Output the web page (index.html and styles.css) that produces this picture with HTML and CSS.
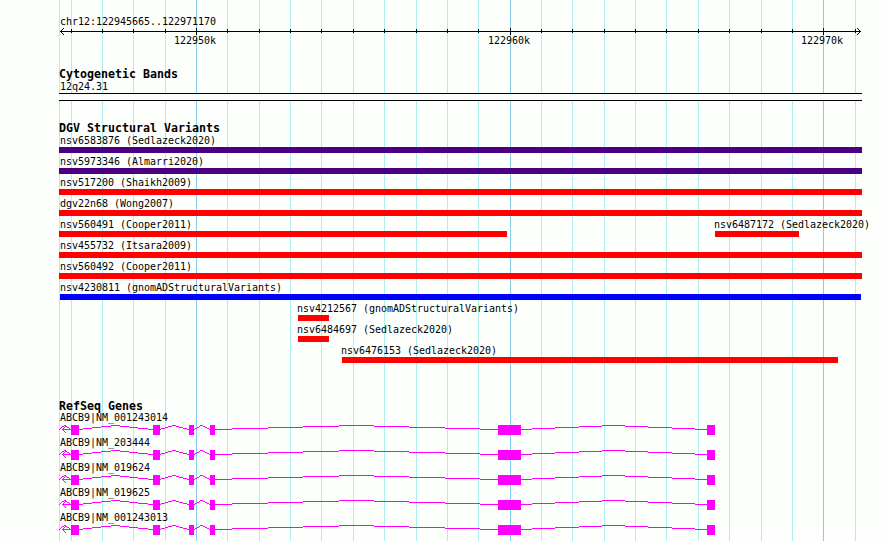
FILE: index.html
```
<!DOCTYPE html>
<html lang="en">
<head>
  <meta charset="UTF-8" />
  <meta name="viewport" content="width=device-width, initial-scale=1" />
  <title>chr12:122945665..122971170</title>
  <link rel="stylesheet" href="styles.css">
</head>
<body>

  <!-- Vertical guide lines -->
  <svg class="grid" width="890" height="541" aria-hidden="true">
    <path class="minor" d="M59.5 0V541M71.5 0V541M102.5 0V541M133.5 0V541M165.5 0V541M227.5 0V541M259.5 0V541M290.5 0V541M321.5 0V541M353.5 0V541M384.5 0V541M416.5 0V541M447.5 0V541M478.5 0V541M541.5 0V541M572.5 0V541M604.5 0V541M635.5 0V541M666.5 0V541M698.5 0V541M729.5 0V541M761.5 0V541M792.5 0V541M855.5 0V541"/>
    <path class="major" d="M196.5 0V541M510.5 0V541M823.5 0V541"/>
  </svg>

  <!-- Gene model, shared by all the transcripts -->
  <svg class="defs" width="0" height="0" aria-hidden="true">
    <symbol id="gene" viewBox="0 0 656 10">
      <path class="exon" d="M12 0h8v10h-8zM94 0h7v10h-7zM130 0h5v10h-5zM151 0h5v10h-5zM439 0h23v10h-23zM648 0h8v10h-8z"/>
      <path class="intron" d="M20 4.5h4M24 3.5h9M33 2.5h9M42 1.5h10M52 .5h9M61 1.5h9M70 2.5h9M79 3.5h10M89 4.5h5"/>
      <path class="intron" d="M101 4.5h1M102 3.5h4M106 2.5h3M109 1.5h4M113 .5h4M117 1.5h3M120 2.5h4M124 3.5h4M128 4.5h2"/>
      <path class="intron" d="M135 4.5h1M136 3.5h2M138 2.5h2M140 1.5h1M141 .5h3M144 1.5h2M146 2.5h2M148 3.5h2M150 4.5h1"/>
      <path class="intron" d="M156 4.5h17M173 3.5h36M209 2.5h35M244 1.5h36M280 .5h35M315 1.5h35M350 2.5h36M386 3.5h35M421 4.5h18"/>
      <path class="intron" d="M462 4.5h11M473 3.5h23M496 2.5h24M520 1.5h23M543 .5h23M566 1.5h23M589 2.5h24M613 3.5h23M636 4.5h12"/>
      <!-- Clipped last intron and strand arrow -->
      <path class="intron" d="M0 4.5h1M1 3.5h1M2 2.5h1M3 1.5h2M5 .5h2M7 1.5h1M8 2.5h2M10 3.5h1"/>
      <path class="intron" d="M3 4.5h9M4 3.5h1M5 2.5h1M6 1.5h1M4 5.5h1M5 6.5h1M6 7.5h1"/>
    </symbol>
  </svg>

  <main class="panel">
    <header class="ruler">
      <div class="label">chr12:122945665..122971170</div>
      <svg class="scale" width="803" height="9">
        <path d="M1 4.5H802"/>
        <path class="tip" d="M4 1h1v1h-1zM3 2h1v1h-1zM2 3h1v1h-1zM2 5h1v1h-1zM3 6h1v1h-1zM4 7h1v1h-1zM798 1h1v1h-1zM799 2h1v1h-1zM800 3h1v1h-1zM800 5h1v1h-1zM799 6h1v1h-1zM798 7h1v1h-1z"/>
        <path d="M12.5 2v4M43.5 2v4M74.5 2v4M106.5 2v4M137.5 1v7M168.5 2v4M200.5 2v4M231.5 2v4M262.5 2v4M294.5 2v4M325.5 2v4M357.5 2v4M388.5 2v4M419.5 2v4M451.5 1v7M482.5 2v4M513.5 2v4M545.5 2v4M576.5 2v4M607.5 2v4M639.5 2v4M670.5 2v4M702.5 2v4M733.5 2v4M764.5 1v7M796.5 2v4"/>
      </svg>
      <div class="ticks">
        <span>122950k</span>
        <span>122960k</span>
        <span>122970k</span>
      </div>
    </header>

    <section class="track cytobands">
      <h2>Cytogenetic Bands</h2>
      <div class="label">12q24.31</div>
      <div class="band"></div>
    </section>

    <section class="track variants">
      <h2>DGV Structural Variants</h2>
      <div class="row">
        <div class="feature indigo full" style="width: 803px"><span class="label">nsv6583876 (Sedlazeck2020)</span></div>
      </div>
      <div class="row">
        <div class="feature indigo full" style="width: 803px"><span class="label">nsv5973346 (Almarri2020)</span></div>
      </div>
      <div class="row">
        <div class="feature red full" style="width: 803px"><span class="label">nsv517200 (Shaikh2009)</span></div>
      </div>
      <div class="row">
        <div class="feature red full" style="width: 803px"><span class="label">dgv22n68 (Wong2007)</span></div>
      </div>
      <div class="row">
        <div class="feature red full" style="width: 448px"><span class="label">nsv560491 (Cooper2011)</span></div>
        <div class="feature red" style="width: 84px; margin-left: 208px"><span class="label">nsv6487172 (Sedlazeck2020)</span></div>
      </div>
      <div class="row">
        <div class="feature red full" style="width: 803px"><span class="label">nsv455732 (Itsara2009)</span></div>
      </div>
      <div class="row">
        <div class="feature red full" style="width: 803px"><span class="label">nsv560492 (Cooper2011)</span></div>
      </div>
      <div class="row">
        <div class="feature blue" style="width: 801px; margin-left: 1px"><span class="label inset">nsv4230811 (gnomADStructuralVariants)</span></div>
      </div>
      <div class="row">
        <div class="feature red" style="width: 31px; margin-left: 239px"><span class="label">nsv4212567 (gnomADStructuralVariants)</span></div>
      </div>
      <div class="row">
        <div class="feature red" style="width: 31px; margin-left: 239px"><span class="label">nsv6484697 (Sedlazeck2020)</span></div>
      </div>
      <div class="row">
        <div class="feature red" style="width: 496px; margin-left: 283px"><span class="label">nsv6476153 (Sedlazeck2020)</span></div>
      </div>
    </section>

    <section class="track genes">
      <h2>RefSeq Genes</h2>
      <div class="gene">
        <div class="label">ABCB9|NM_001243014</div>
        <svg width="656" height="10"><use href="#gene"/></svg>
      </div>
      <div class="gene">
        <div class="label">ABCB9|NM_203444</div>
        <svg width="656" height="10"><use href="#gene"/></svg>
      </div>
      <div class="gene">
        <div class="label">ABCB9|NM_019624</div>
        <svg width="656" height="10"><use href="#gene"/></svg>
      </div>
      <div class="gene">
        <div class="label">ABCB9|NM_019625</div>
        <svg width="656" height="10"><use href="#gene"/></svg>
      </div>
      <div class="gene">
        <div class="label">ABCB9|NM_001243013</div>
        <svg width="656" height="10"><use href="#gene"/></svg>
      </div>
    </section>
  </main>

</body>
</html>
```
FILE: styles.css
```
:root {
  --bg: #fdfffc;
  --minor: #afeeee;
  --major: #87ceeb;
  --indigo: #4b0082;
  --red: #ff0000;
  --blue: #0000ff;
  --magenta: #ff00ff;
}

* {
  box-sizing: border-box;
}

body {
  margin: 0;
  height: 541px;
  overflow: hidden;
  background: var(--bg);
  color: #000;
  font: 10px/12px "DejaVu Sans Mono", monospace;
  letter-spacing: -0.02px;
  white-space: nowrap;
}

svg {
  display: block;
  shape-rendering: crispEdges;
}

/* Guide lines run behind every track */
.grid {
  position: absolute;
  top: 0;
  left: 0;
}

.grid .minor {
  stroke: var(--minor);
}

.grid .major {
  stroke: var(--major);
}

.defs {
  position: absolute;
}

.panel {
  position: relative;
  width: 803px;
  margin-left: 59px;
  padding-top: 15px;
}

.label {
  display: block;
  height: 12px;
  padding-left: 1px;
  line-height: 14px;
}

h2 {
  margin: 0;
  height: 12px;
  font-size: 11.63px;
  line-height: 12px;
  letter-spacing: 0;
}

/* Ruler */
.ruler {
  height: 53px;
}

.scale {
  fill: none;
  stroke: #000;
}

.scale .tip {
  fill: #000;
  stroke: none;
}

.ticks {
  display: flex;
  gap: 272px;
  height: 12px;
  margin-top: -1px;
  padding-left: 115px;
}

.ticks span {
  width: 42px;
}

.ticks span:last-child {
  margin-left: -1px;
}

/* Cytogenetic bands */
.cytobands {
  height: 54px;
}

.band {
  height: 8px;
  margin-top: 1px;
  border: solid #000;
  border-width: 1px 0;
  background: var(--bg);
}

/* Structural variants */
.variants {
  height: 278px;
}

.row {
  display: flex;
  height: 21px;
}

.feature {
  flex: none;
  height: 19px;
  border-bottom: 6px solid;
}

.feature .label {
  width: 0;
  margin-left: -1px;
  padding: 0;
  color: #000;
}

.feature.full .label {
  margin-left: 1px;
}

.feature .label.inset {
  margin-left: 0;
}

.indigo {
  border-color: var(--indigo);
}

.red {
  border-color: var(--red);
}

.blue {
  border-color: var(--blue);
}

/* Genes */
.gene {
  height: 25px;
}

/* keeps the underscores clear of the intron peaks */
.gene .label {
  line-height: 12px;
}

.gene svg {
  margin-top: 1px;
}

.exon {
  fill: var(--magenta);
}

.intron {
  fill: none;
  stroke: var(--magenta);
}
```
